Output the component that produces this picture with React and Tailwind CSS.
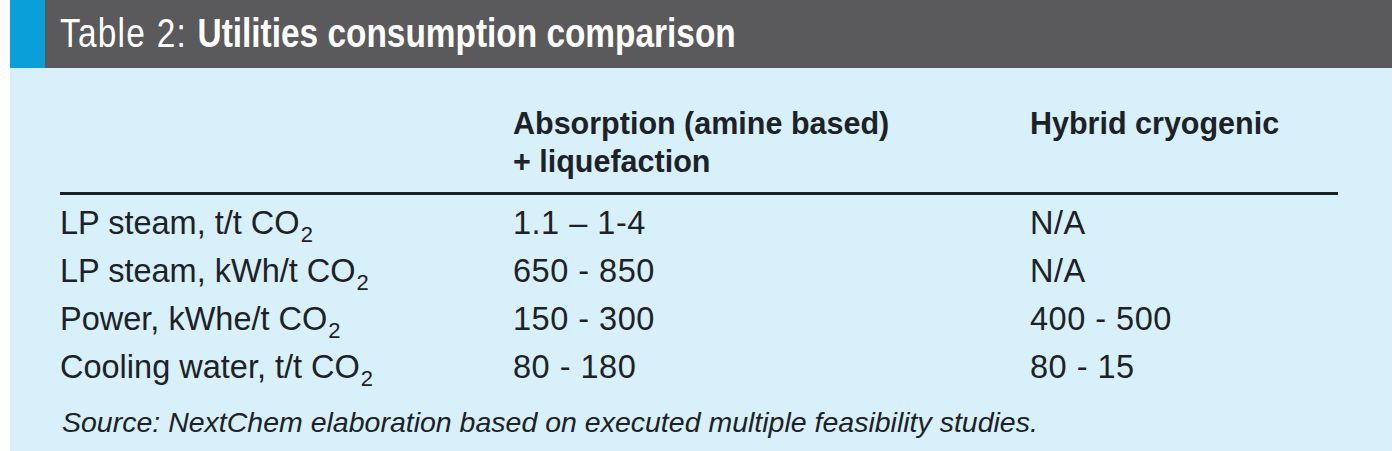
// Table 2: utilities consumption comparison
const ROWS = [
    { label: 'LP steam, t/t CO', a: '1.1 – 1-4', b: 'N/A' },
    { label: 'LP steam, kWh/t CO', a: '650 - 850', b: 'N/A' },
    { label: 'Power, kWhe/t CO', a: '150 - 300', b: '400 - 500' },
    { label: 'Cooling water, t/t CO', a: '80 - 180', b: '80 - 15' },
];

const BODY_FONT = { fontFamily: '"Liberation Sans", Arial, sans-serif' };

export default function App() {
    return (
        <div className="w-[1398px] h-[451px] bg-white flex pl-[10px] pr-[6px] overflow-hidden" style={BODY_FONT}>
            <div className="flex-1 flex flex-col bg-[#d8f0fa]">
                {/* Заголовок */}
                <div className="h-[68px] flex">
                    <div className="w-[35px] bg-[#0a9fd8]" />
                    <div className="flex-1 bg-[#5a595b] pl-[15px] pt-[9px] overflow-hidden">
                        <h1 className="text-[40px] leading-[48px] text-white whitespace-nowrap scale-x-[0.835] origin-left">
                            <span className="font-normal tracking-[1.5px]">Table 2: </span>
                            <span className="font-bold">Utilities consumption comparison</span>
                        </h1>
                    </div>
                </div>

                {/* Таблица */}
                <div className="pl-[50px] pr-[54px] text-[#1c2227]">
                    <div className="grid grid-cols-[453px_517px_1fr] pt-[36px] pb-[12px] border-b-[3px] border-[#1a2126]">
                        <div />
                        <div className="text-[30.5px] leading-[38px] font-bold">
                            Absorption (amine based)<br />+ liquefaction
                        </div>
                        <div className="text-[30.5px] leading-[38px] font-bold">Hybrid cryogenic</div>
                    </div>

                    <div className="pt-[4px]">
                        {ROWS.map(row => (
                            <div key={row.label} className="grid grid-cols-[453px_517px_1fr] text-[32.5px] leading-[48px] whitespace-nowrap">
                                <div>
                                    {row.label}
                                    <sub className="text-[22px] -bottom-[8px] ml-[1px]">2</sub>
                                </div>
                                <div className="tracking-[0.5px]">{row.a}</div>
                                <div className="tracking-[0.5px]">{row.b}</div>
                            </div>
                        ))}
                    </div>

                    <p className="mt-[11px] pl-[2px] text-[28.5px] leading-[40px] italic whitespace-nowrap">
                        Source: NextChem elaboration based on executed multiple feasibility studies.
                    </p>
                </div>
            </div>
        </div>
    );
}
